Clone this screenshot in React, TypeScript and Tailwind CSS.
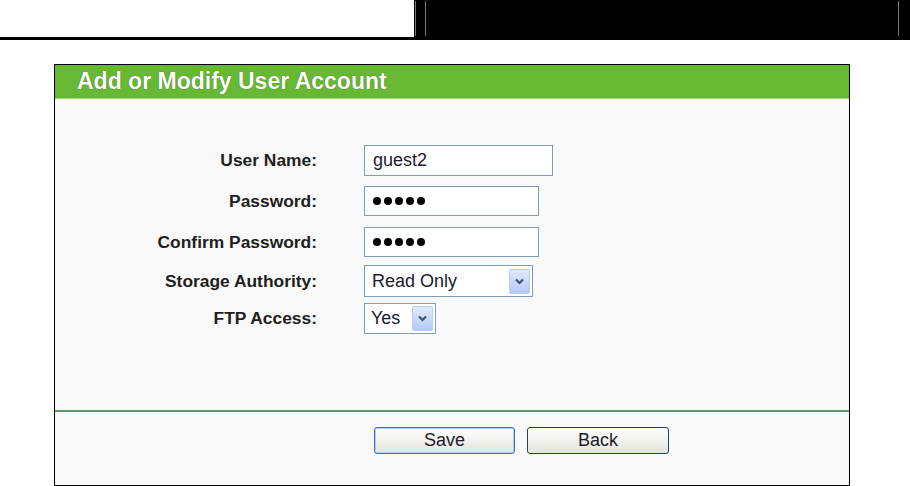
// Add or Modify User Account — router admin form

const font = { fontFamily: '"Liberation Sans", Arial, sans-serif' };

function SelectArrow() {
  return (
    <div className="flex h-[25px] w-[21px] items-center justify-center rounded-[2px] border border-[#b8cbf2] bg-gradient-to-b from-[#e1eafd] to-[#b5c9f4]">
      <svg width="9" height="7" viewBox="0 0 9 7">
        <path d="M1 1.5 L4.5 5 L8 1.5" fill="none" stroke="#3f5278" strokeWidth="2.2" />
      </svg>
    </div>
  );
}

function Dots() {
  return (
    <div className="flex items-center gap-[3px] pl-[8px]">
      {[0, 1, 2, 3, 4].map((i) => (
        <span key={i} className="block h-[8px] w-[8px] rounded-full bg-black" />
      ))}
    </div>
  );
}

const rows = [
  { label: "User Name:", mt: "mt-0", h: "h-[31px]" },
  { label: "Password:", mt: "mt-[10px]", h: "h-[30px]" },
  { label: "Confirm Password:", mt: "mt-[11px]", h: "h-[30px]" },
  { label: "Storage Authority:", mt: "mt-[8px]", h: "h-[32px]" },
  { label: "FTP Access:", mt: "mt-[6px]", h: "h-[31px]" },
];

function Field({ idx }: { idx: number }) {
  if (idx === 0)
    return (
      <div className="flex h-full w-[189px] items-center border border-[#7f9db9] bg-white pl-[8px] text-[18px] text-[#1b1b2e]">
        guest2
      </div>
    );
  if (idx === 1 || idx === 2)
    return (
      <div className="flex h-full w-[175px] items-center border border-[#7f9db9] bg-white">
        <Dots />
      </div>
    );
  if (idx === 3)
    return (
      <div className="flex h-full w-[169px] items-center justify-between border border-[#7f9db9] bg-white pl-[7px] pr-[2px] text-[18px] text-[#1b1b2e]">
        <span>Read Only</span>
        <SelectArrow />
      </div>
    );
  return (
    <div className="flex h-full w-[72px] items-center justify-between border border-[#7f9db9] bg-white pl-[6px] pr-[2px] text-[18px] text-[#1b1b2e]">
      <span>Yes</span>
      <SelectArrow />
    </div>
  );
}

export default function App() {
  return (
    <div className="h-[486px] w-[910px] overflow-hidden bg-white" style={font}>
      {/* Top banner */}
      <div className="flex h-[37px]">
        <div className="w-[414px] bg-white" />
        <div className="flex flex-1 bg-black py-[1px] pl-[1px]">
          <div className="w-px bg-[#7a7a7a]" />
          <div className="w-[9px]" />
          <div className="w-px bg-[#7a7a7a]" />
          <div className="flex-1" />
          <div className="w-px bg-[#7a7a7a]" />
          <div className="w-[11px]" />
        </div>
      </div>
      <div className="h-[3px] bg-black" />

      {/* Panel */}
      <div className="ml-[54px] mt-[24px] flex h-[422px] w-[796px] flex-col border border-black bg-[#f9f9f9]">
        <div className="flex h-[33px] items-center bg-[#67b934] pl-[22px]">
          <span
            className="text-[23px] font-bold leading-none text-white"
            style={{ textShadow: "0 0 1px #2d5d14" }}
          >
            Add or Modify User Account
          </span>
        </div>
        <div className="h-px bg-[#9fd57a]" />

        {/* Form body */}
        <div className="flex flex-1 flex-col pt-[46px]">
          {rows.map((r, i) => (
            <div key={r.label} className={`flex ${r.mt} ${r.h} items-center`}>
              <div className="w-[262px] text-right text-[17.4px] font-bold text-[#1e1e1e]">
                {r.label}
              </div>
              <div className="ml-[47px] h-full">
                <Field idx={i} />
              </div>
            </div>
          ))}
        </div>

        <div className="h-[2px] bg-[#5c9a6c]" />

        {/* Buttons */}
        <div className="flex h-[73px] items-start pl-[319px] pt-[15px]">
          <button className="flex h-[27px] w-[141px] items-center justify-center rounded-[3px] border border-[#3c6fb5] bg-gradient-to-b from-white to-[#e4e4dc] text-[18px] text-[#1b1b2e] shadow-[inset_0_0_0_1px_#b6cdf3]">
            Save
          </button>
          <button className="ml-[12px] flex h-[27px] w-[142px] items-center justify-center rounded-[3px] border border-[#1e3f6e] bg-gradient-to-b from-white to-[#e4e4dc] text-[18px] text-[#1b1b2e]">
            Back
          </button>
        </div>
      </div>
    </div>
  );
}
